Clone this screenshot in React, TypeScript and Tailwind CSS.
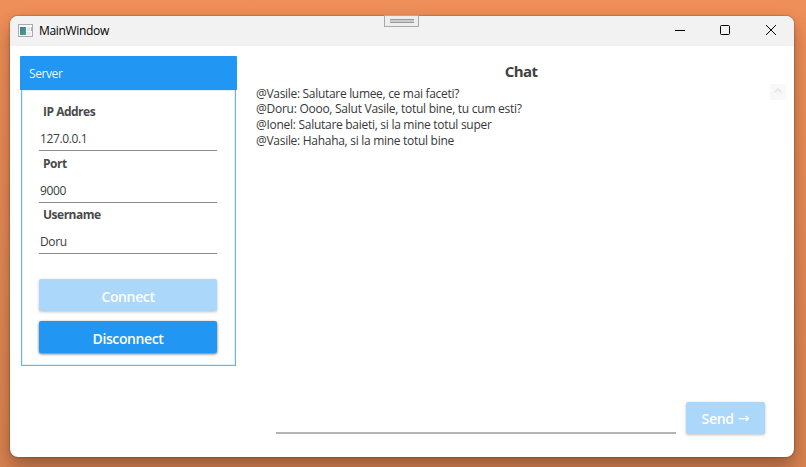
import React from "react";

const messages = [
  { text: "@Vasile: Salutare lumee, ce mai faceti?", style: "tracking-[-0.31px]" },
  { text: "@Doru: Oooo, Salut Vasile, totul bine, tu cum esti?", style: "tracking-[-0.26px]" },
  { text: "@Ionel: Salutare baieti, si la mine totul super", style: "tracking-[-0.28px]" },
  { text: "@Vasile: Hahaha, si la mine totul bine", style: "tracking-[-0.29px]" },
];

function Field({ label, value }: { label: string; value: string }) {
  return (
    <div className="h-[51.7px]">
      <div className="h-5 pl-1 text-[12px] leading-5 font-bold tracking-[-0.5px] text-[#4a4a4a]">{label}</div>
      <div className="flex h-[29px] items-end border-b border-[#8b8b8b] pb-[2px] pl-px text-[12px] leading-[18px] tracking-[-0.38px] text-[#3c3c3c]">
        {value}
      </div>
    </div>
  );
}

function TitleBar() {
  return (
    <header className="flex h-[30px] shrink-0 items-center bg-[#f2f2f2]">
      <svg className="ml-2 -mt-[2px] h-[13px] w-[15px]" viewBox="0 0 15 13" shapeRendering="crispEdges">
        <defs>
          <linearGradient id="pane" x1="0" y1="0" x2="1" y2="1">
            <stop offset="0" stopColor="#4775a6" />
            <stop offset="1" stopColor="#4ea579" />
          </linearGradient>
        </defs>
        <rect x="0.5" y="0.5" width="14" height="12" fill="#fafafa" stroke="#a8abb3" />
        <rect x="2" y="3" width="6" height="8" fill="url(#pane)" />
        <rect x="9" y="3" width="3" height="4" fill="#e3e5e5" />
        <rect x="9" y="8" width="4" height="3" fill="#e8eaea" />
        <rect x="13" y="3" width="1" height="4" fill="#91bdb5" />
      </svg>
      <span className="ml-[6px] text-[12px] tracking-[-0.33px] text-black">MainWindow</span>
      <div className="ml-auto flex h-full items-center text-black">
        <svg className="h-full w-[46px]" viewBox="0 0 46 30">
          <path d="M19 14.5h10" stroke="currentColor" />
        </svg>
        <svg className="h-full w-[46px]" viewBox="0 0 46 30" fill="none">
          <rect x="18.5" y="9.5" width="9" height="9" rx="1" stroke="currentColor" />
        </svg>
        <svg className="h-full w-[46px]" viewBox="0 0 46 30" fill="none">
          <path d="M18 9l10 10M28 9L18 19" stroke="currentColor" />
        </svg>
      </div>
    </header>
  );
}

export default function App() {
  return (
    <div className="relative h-[467px] w-[806px] overflow-hidden bg-linear-to-b from-[#ee8e58] to-[#d98250] pt-4 pl-[10px] font-['Open_Sans','Noto_Sans',sans-serif]">
      <div className="flex h-[441px] w-[784px] flex-col overflow-hidden rounded-lg bg-white shadow-[0_0_2px_rgba(0,0,0,0.5),0_10px_18px_rgba(0,0,0,0.3)]">
        <TitleBar />
        <main className="flex flex-1">
          <aside className="ml-[10px] mt-[10px] w-[217px]">
            <div className="flex h-[34px] items-center rounded-t-[1px] bg-[#2196f3] pt-px pl-[9px] text-[12px] tracking-[-0.4px] text-white/95">
              Server
            </div>
            <div className="ml-px h-[276px] w-[215px] border border-t-0 border-[#64b5f6] pt-3 pr-[18px] pl-[17px] shadow-[inset_0_0_0_0.5px_#c4e3fc]">
              <Field label="IP Addres" value="127.0.0.1" />
              <Field label="Port" value="9000" />
              <Field label="Username" value="Doru" />
              <button className="mt-[22px] flex h-8 w-full items-center justify-center rounded-[2px] bg-[#abd7fa] pt-[2px] text-[14px] font-semibold tracking-[-0.36px] text-white shadow-[0_1px_3px_rgba(0,0,0,0.25)]">
                Connect
              </button>
              <button className="mt-[10px] flex h-8 w-full items-center justify-center rounded-[2px] bg-[#2196f3] pt-[2px] text-[14px] font-semibold tracking-[-0.4px] text-white shadow-[0_1px_3px_rgba(0,0,0,0.6)]">
                Disconnect
              </button>
            </div>
          </aside>
          <section className="ml-[19px] flex w-[530px] flex-col">
            <h1 className="mt-[14px] h-[22px] text-center text-[15px] leading-[22px] font-bold tracking-[-0.6px] text-[#414141]">
              Chat
            </h1>
            <div className="mt-[2px] flex h-[310px] justify-between">
              <div className="pt-[1.5px] text-[12px] leading-[15.8px] text-[#383838]">
                {messages.map((m) => (
                  <p key={m.text} className={"whitespace-nowrap " + m.style}>{m.text}</p>
                ))}
              </div>
              <div className="flex h-4 w-4 items-center justify-center bg-[#f8f8f8]">
                <svg className="h-2 w-2" viewBox="0 0 8 8" fill="none" stroke="#e2e2e2">
                  <path d="M0.5 4.5L4 1l3.5 3.5" strokeWidth="1.3" />
                  <path d="M4 2v4" stroke="#efefef" />
                </svg>
              </div>
            </div>
            <div className="mt-2 flex">
              <div className="ml-5 h-8 w-[400px] border-b-2 border-[#b5b5b5]" />
              <button className="ml-[10px] flex h-8 w-[79px] items-center justify-center gap-1 rounded-[2px] bg-[#abd7fa] pt-px text-[14px] font-semibold tracking-[-0.3px] text-white shadow-[0_1px_3px_rgba(0,0,0,0.25)]">
                <span>Send</span>
                <span className="font-['DejaVu_Sans',sans-serif] font-normal tracking-normal">→</span>
              </button>
            </div>
          </section>
        </main>
      </div>
      <div className="absolute top-[15px] left-[384px] flex h-3 w-[35px] items-center justify-center border border-[#a9a9a9] bg-[#eeeeee]">
        <div className="h-1 w-6 border-y border-[#999] bg-[#ccc]" />
      </div>
    </div>
  );
}
